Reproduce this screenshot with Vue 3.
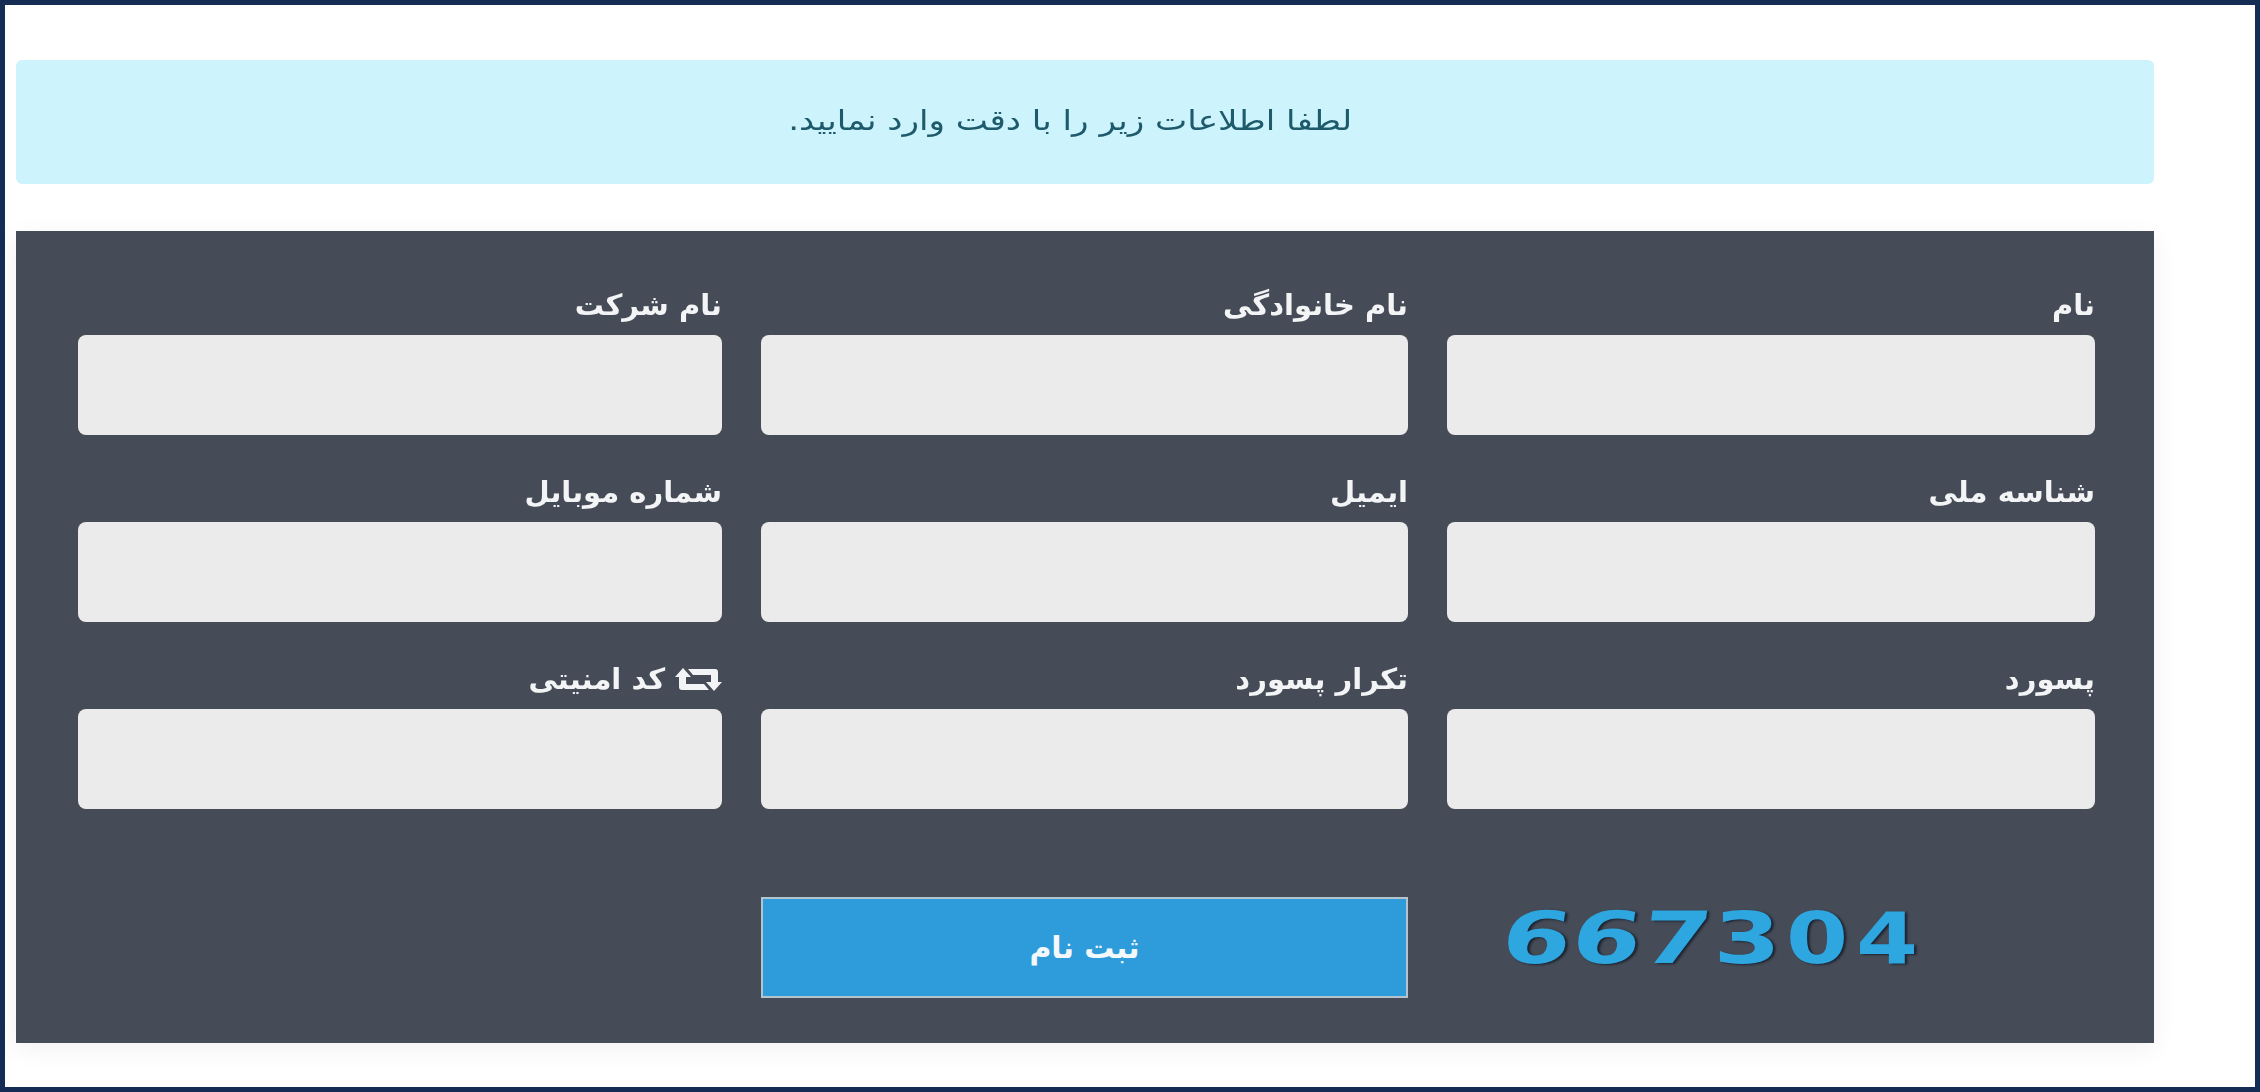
<script setup>
const rows = [
  ['نام', 'نام خانوادگی', 'نام شرکت'],
  ['شناسه ملی', 'ایمیل', 'شماره موبایل'],
  ['پسورد', 'تکرار پسورد', 'کد امنیتی'],
]
const digits = [
  { c: '6', tilt: 'tilt-a' },
  { c: '6', tilt: 'tilt-a' },
  { c: '7', tilt: 'tilt-b' },
  { c: '3', tilt: 'tilt-c' },
  { c: '0', tilt: 'tilt-d' },
  { c: '4', tilt: 'tilt-d' },
]
</script>

<template>
  <div class="page">
    <div class="content">
      <div class="alert"><span class="alert-text">لطفا اطلاعات زیر را با دقت وارد نمایید.</span></div>
      <form class="panel" dir="rtl" @submit.prevent>
        <template v-for="(row, r) in rows" :key="r">
          <div v-for="label in row" :key="label" class="field">
            <label class="label">
              <svg v-if="label === 'کد امنیتی'" class="retweet" viewBox="0 0 47 23" aria-hidden="true">
                <path d="M8 0 L16 9 H11 V16 H29 L34 22 H7 Q4 22 4 19 V9 H0 Z" fill="#f3f4f5" />
                <path d="M39 23 L31 14 H36 V7 H18 L13 1 H40 Q43 1 43 4 V14 H47 Z" fill="#f3f4f5" />
              </svg>
              <span>{{ label }}</span>
            </label>
            <input class="input" type="text" />
          </div>
        </template>
        <div class="captcha" dir="ltr">
          <span v-for="(d, i) in digits" :key="i" class="digit" :class="d.tilt">{{ d.c }}</span>
        </div>
        <button class="submit" type="submit">ثبت نام</button>
      </form>
    </div>
  </div>
</template>

<style scoped>
.page {
  box-sizing: border-box;
  width: 2260px;
  height: 1092px;
  border: 5px solid #152c55;
  background: #fff;
  font-family: "DejaVu Sans", "Noto Sans", sans-serif;
}
.content {
  padding: 55px 101px 0 11px;
  filter: blur(0.7px);
}
.alert {
  box-sizing: border-box;
  height: 124px;
  margin-bottom: 47px;
  display: flex;
  align-items: center;
  justify-content: center;
  background: #cdf3fc;
  border-radius: 6px;
  color: #1d5a6b;
  font-size: 28px;
  direction: rtl;
  padding: 0 30px 4px 0;
}
.alert-text {
  display: inline-block;
  transform: scaleX(1.22);
}
.panel {
  box-sizing: border-box;
  height: 812px;
  padding: 56px 59px 46px 62px;
  display: grid;
  grid-template-columns: 648px 647px 644px;
  grid-template-rows: 148px 148px 148px 101px;
  column-gap: 39px;
  row-gap: 39px;
  background: #464c57;
  box-shadow: 0 6px 24px rgba(0, 0, 0, 0.06);
}
.field {
  display: flex;
  flex-direction: column;
}
.label {
  height: 36px;
  margin-bottom: 12px;
  display: flex;
  align-items: center;
  gap: 10px;
  color: #f3f4f5;
  font-size: 29px;
  font-weight: 700;
  line-height: 36px;
}
.retweet {
  width: 47px;
  height: 23px;
  flex: none;
}
.input {
  box-sizing: border-box;
  height: 100px;
  width: 100%;
  border: 0;
  border-radius: 8px;
  background: #ebebeb;
}
.captcha {
  margin-top: 40px;
  height: 100px;
  display: flex;
  align-items: center;
  padding-left: 55px;
  grid-column: 1;
}
.digit {
  width: 70px;
  display: inline-block;
  text-align: center;
  color: #2ea6e0;
  font-size: 72px;
  font-weight: 700;
  line-height: 1;
  text-shadow: 2px 1px 2px rgba(10, 20, 35, 0.7);
}
.tilt-a { transform: scaleX(1.38) skewX(-6deg); }
.tilt-b { transform: scaleX(1.38) skewX(-5deg); }
.tilt-c { transform: scaleX(1.34); }
.tilt-d { transform: scaleX(1.24); }
.submit {
  grid-column: 2;
  margin-top: 49px;
  height: 101px;
  width: 100%;
  border: 2px solid #b4c4cf;
  background: #2e9cdb;
  color: #f3f8fb;
  font-family: inherit;
  font-size: 30px;
  font-weight: 700;
}
</style>

<style>
html, body { margin: 0; overflow: hidden; background: #fff; }
</style>
